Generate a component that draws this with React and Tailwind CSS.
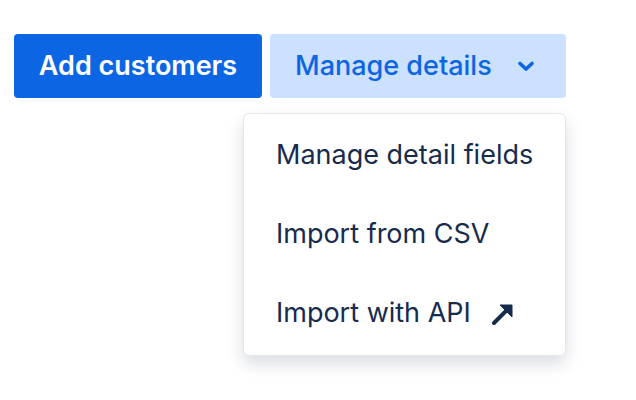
import { useState } from 'react';

const items = [
    { id: 'fields', label: 'Manage detail fields' },
    { id: 'csv', label: 'Import from CSV' },
    { id: 'api', label: 'Import with API', external: true },
];

const App = () => {
    const [open, setOpen] = useState(true);

    return (
        <div className="min-h-[400px] w-[636px] bg-white font-['Inter',sans-serif]">
            <div className="flex gap-2 pl-[14px] pt-[34px]">
                <button className="h-16 w-[248px] rounded-[4px] bg-[#0c66e4] text-[27px] font-semibold text-white">
                    Add customers
                </button>
                <div className="relative">
                    <button
                        onClick={() => setOpen(!open)}
                        className="flex h-16 w-[296px] items-center rounded-[4px] bg-[#cce0ff] pl-[25px] text-[27px] font-medium text-[#0c66e4]"
                    >
                        Manage details
                        <svg className="ml-[25px]" width="18" height="18" viewBox="0 0 18 18">
                            <path d="M3 6.5l6 5.5 6-5.5" fill="none" stroke="currentColor" strokeWidth="3.6" strokeLinecap="round" strokeLinejoin="round" />
                        </svg>
                    </button>
                    {open && (
                        <div className="absolute right-0 top-[79px] w-[323px] rounded-[6px] border border-[#e4e6ea] bg-white py-[2px] shadow-[0_8px_16px_rgba(9,30,66,0.15)]">
                            {items.map((item) => (
                                <div key={item.id} className="flex h-[79px] items-center pl-[32px] text-[27px] text-[#172b4d]">
                                    {item.label}
                                    {item.external && (
                                        <svg className="ml-[20px]" width="24" height="24" viewBox="0 0 24 24">
                                            <path d="M3 21L18 6" fill="none" stroke="currentColor" strokeWidth="4" strokeLinecap="round" />
                                            <path d="M9 3h12v12z" fill="currentColor" stroke="currentColor" strokeWidth="1" strokeLinejoin="round" />
                                        </svg>
                                    )}
                                </div>
                            ))}
                        </div>
                    )}
                </div>
            </div>
        </div>
    );
};

export default App;
